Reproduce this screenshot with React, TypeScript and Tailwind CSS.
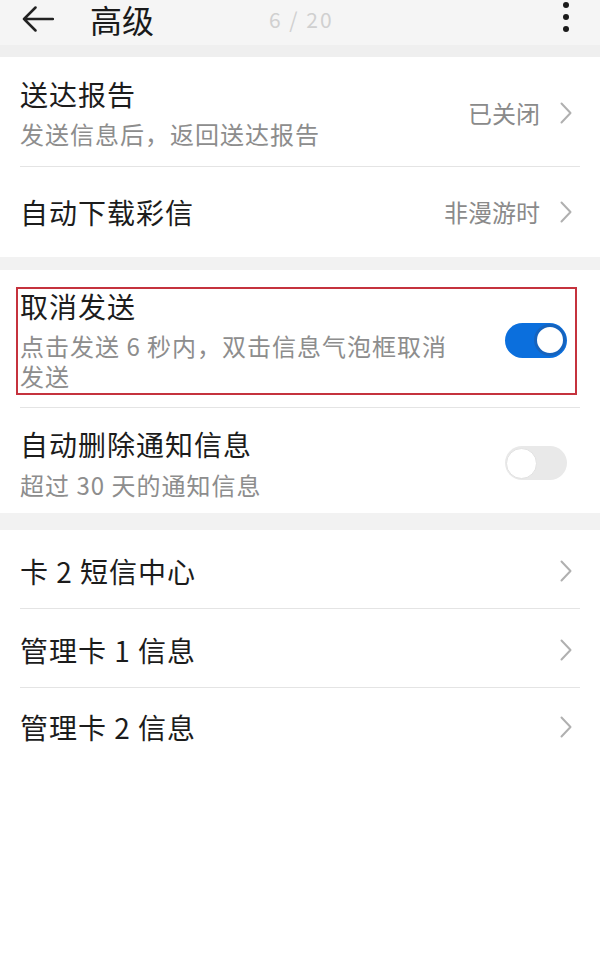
import React from "react"

function Chevron() {
  return (
    <svg width="12" height="22" viewBox="0 0 12 22" fill="none">
      <path d="M1.5 1.5 L10.5 11 L1.5 20.5" stroke="#b0b0b0" strokeWidth="2" strokeLinecap="round" strokeLinejoin="round" />
    </svg>
  )
}

function Divider() {
  return <div className="mx-[20px] h-px bg-[#e4e4e4]" />
}

function Toggle({ on }: { on: boolean }) {
  if (on) {
    return (
      <div className="flex h-[35px] w-[62px] shrink-0 items-center justify-end rounded-full bg-[#0b6fdd] pr-[1px]">
        <div className="h-[32px] w-[32px] rounded-full border-[3px] border-[#1663bd] bg-white" />
      </div>
    )
  }
  return (
    <div className="flex h-[34px] w-[62px] shrink-0 items-center justify-start rounded-full bg-[#e9e9e9] pl-[1px]">
      <div className="h-[31px] w-[31px] rounded-full border border-[#e2e2e2] bg-white" />
    </div>
  )
}

function LinkRow({ title, height }: { title: string; height: string }) {
  return (
    <div className={`flex items-center justify-between pl-[20px] pr-[28px] pt-[3px] ${height}`}>
      <span className="text-[28px] leading-[36px] tracking-[1px] text-[#1c1c1c]">{title}</span>
      <Chevron />
    </div>
  )
}

export default function App() {
  return (
    <div className="min-h-[964px] bg-white font-['Noto_Sans_CJK_SC','Noto_Sans',sans-serif]">
      {/* header */}
      <div className="bg-[#f5f5f5]">
        <div className="flex h-[45px] items-start pl-[22px] pr-[31px]">
          <div className="flex h-[38px] items-center">
            <svg width="32" height="26" viewBox="0 0 32 26" fill="none">
              <path d="M31 13 H2 M13.5 1.5 L2 13 L13.5 24.5" stroke="#222" strokeWidth="2.5" strokeLinecap="round" strokeLinejoin="round" />
            </svg>
            <span className="ml-[36px] text-[32px] leading-[38px] text-[#1a1a1a]">高级</span>
            <span className="ml-[115px] text-[21px] leading-[38px] tracking-[2px] text-[#d0d0d0]">6 / 20</span>
          </div>
          <div className="ml-auto mt-[2px] flex flex-col items-center gap-[6px]">
            <div className="h-[6px] w-[6px] rounded-full bg-[#1a1a1a]" />
            <div className="h-[6px] w-[6px] rounded-full bg-[#1a1a1a]" />
            <div className="h-[6px] w-[6px] rounded-full bg-[#1a1a1a]" />
          </div>
        </div>
        <div className="h-[12px] bg-[#efefef]" />
      </div>

      {/* section 1 */}
      <div className="flex items-center justify-between pb-[17px] pl-[20px] pr-[28px] pt-[19px]">
        <div className="flex flex-col">
          <span className="text-[28px] leading-[36px] tracking-[1px] text-[#1c1c1c]">送达报告</span>
          <span className="mt-[7px] text-[24px] leading-[30px] tracking-[1px] text-[#8d8d8d]">发送信息后，返回送达报告</span>
        </div>
        <div className="flex items-center gap-[20px]">
          <span className="text-[24px] leading-[30px] text-[#8a8a8a]">已关闭</span>
          <Chevron />
        </div>
      </div>
      <Divider />
      <div className="flex h-[90px] items-center justify-between pl-[20px] pr-[28px]">
        <span className="text-[28px] leading-[36px] tracking-[1px] text-[#1c1c1c]">自动下载彩信</span>
        <div className="flex items-center gap-[20px]">
          <span className="text-[24px] leading-[30px] text-[#8a8a8a]">非漫游时</span>
          <Chevron />
        </div>
      </div>

      <div className="h-[13px] bg-[#f2f2f2]" />

      {/* section 2 */}
      <div className="pb-[12px] pl-[16px] pr-[23px] pt-[17px]">
        <div className="flex items-center justify-between border-2 border-[#c5323d] pb-[2px] pl-[2px] pr-[8px]">
          <div className="flex w-[450px] flex-col">
            <span className="text-[28px] leading-[34px] tracking-[1px] text-[#1c1c1c]">取消发送</span>
            <span className="mt-[8px] text-[24px] leading-[30px] tracking-[1px] text-[#8d8d8d]">点击发送 6 秒内，双击信息气泡框取消发送</span>
          </div>
          <Toggle on />
        </div>
      </div>
      <Divider />
      <div className="flex items-center justify-between pb-[13px] pl-[20px] pr-[33px] pt-[18px]">
        <div className="flex flex-col">
          <span className="text-[28px] leading-[36px] tracking-[1px] text-[#1c1c1c]">自动删除通知信息</span>
          <span className="mt-[8px] text-[24px] leading-[30px] tracking-[1px] text-[#8d8d8d]">超过 30 天的通知信息</span>
        </div>
        <Toggle on={false} />
      </div>

      <div className="h-[17px] bg-[#f2f2f2]" />

      {/* section 3 */}
      <LinkRow title="卡 2 短信中心" height="h-[78px]" />
      <Divider />
      <LinkRow title="管理卡 1 信息" height="h-[78px]" />
      <Divider />
      <LinkRow title="管理卡 2 信息" height="h-[74px]" />
    </div>
  )
}
